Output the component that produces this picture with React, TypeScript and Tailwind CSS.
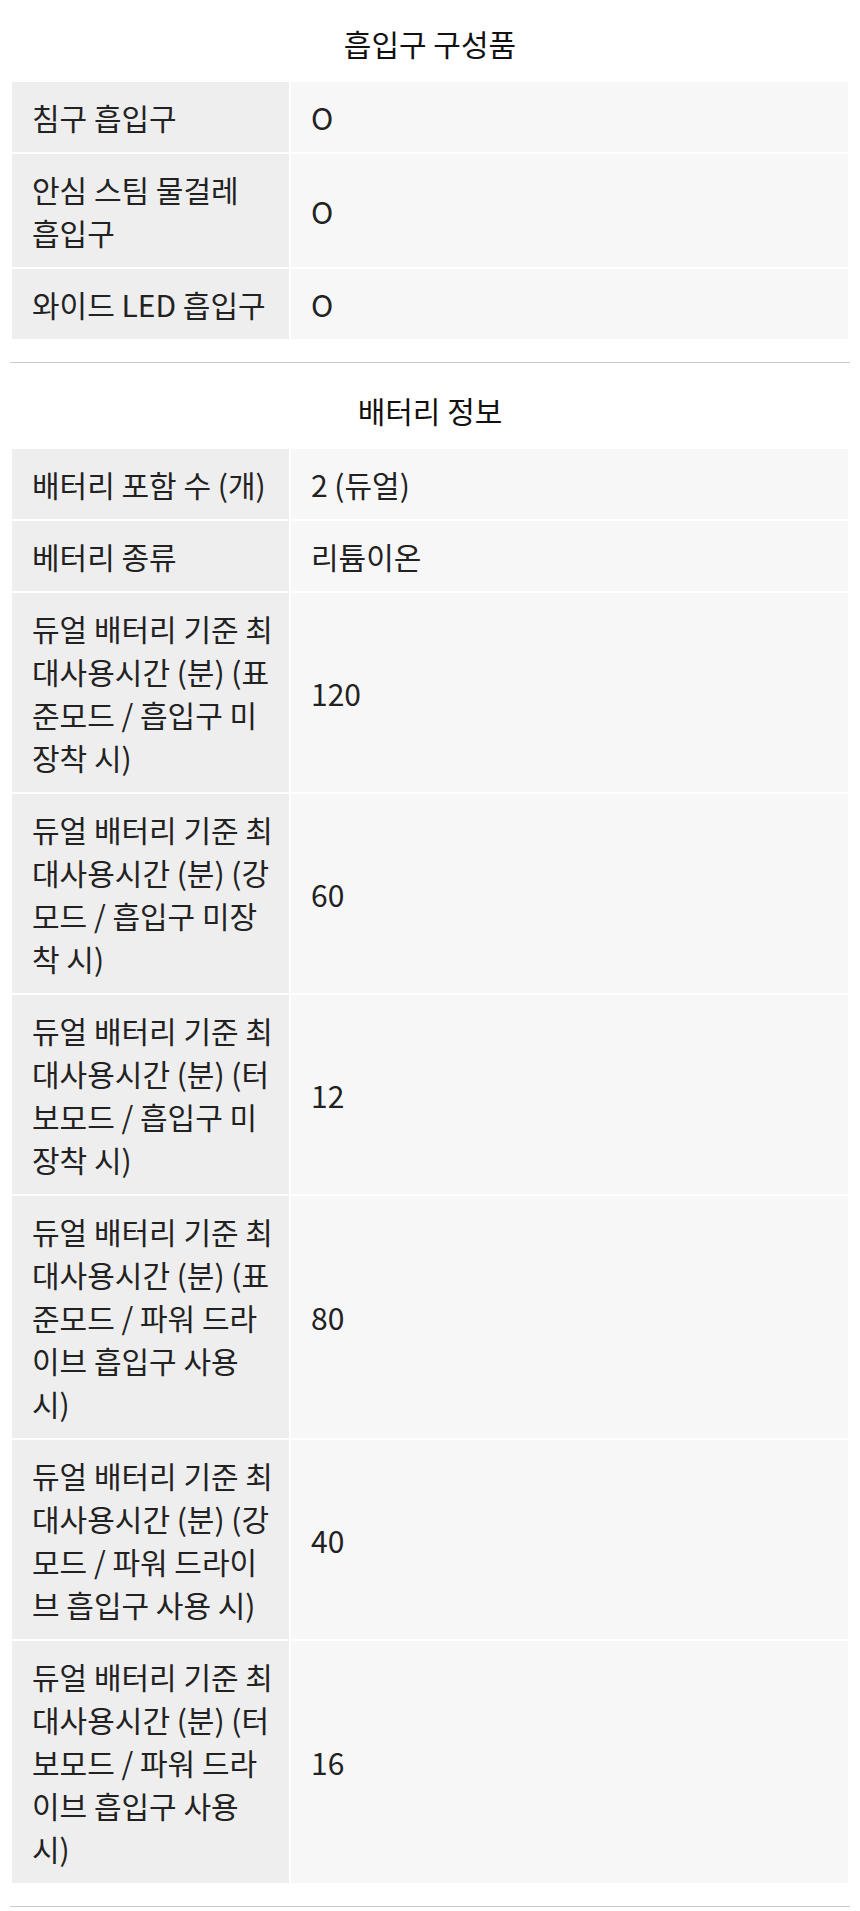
import React from 'react';

type Row = { label: React.ReactNode; value: string };

const sections: { title: string; rows: Row[] }[] = [
  {
    title: '흡입구 구성품',
    rows: [
      { label: '침구 흡입구', value: 'O' },
      { label: <>안심 스팀 물걸레 <span className="whitespace-nowrap">흡입구</span></>, value: 'O' },
      { label: '와이드 LED 흡입구', value: 'O' },
    ],
  },
  {
    title: '배터리 정보',
    rows: [
      { label: '배터리 포함 수 (개)', value: '2 (듀얼)' },
      { label: '베터리 종류', value: '리튬이온' },
      { label: '듀얼 배터리 기준 최대사용시간 (분) (표준모드 / 흡입구 미장착 시)', value: '120' },
      { label: '듀얼 배터리 기준 최대사용시간 (분) (강모드 / 흡입구 미장착 시)', value: '60' },
      { label: '듀얼 배터리 기준 최대사용시간 (분) (터보모드 / 흡입구 미장착 시)', value: '12' },
      { label: '듀얼 배터리 기준 최대사용시간 (분) (표준모드 / 파워 드라이브 흡입구 사용 시)', value: '80' },
      { label: '듀얼 배터리 기준 최대사용시간 (분) (강모드 / 파워 드라이브 흡입구 사용 시)', value: '40' },
      { label: '듀얼 배터리 기준 최대사용시간 (분) (터보모드 / 파워 드라이브 흡입구 사용 시)', value: '16' },
    ],
  },
];

const SpecSection = ({ title, rows }: { title: string; rows: Row[] }) => (
  <section className="pt-[21px]">
    <h3 className="text-center text-[30px] leading-[44px] font-normal text-[#111] mb-[15px]">{title}</h3>
    <table className="w-full border-separate border-spacing-[2px] table-fixed">
      <colgroup>
        <col className="w-[277px]" />
        <col />
      </colgroup>
      <tbody>
        {rows.map((r, i) => (
          <tr key={i}>
            <th className="bg-[#eeeeee] text-left font-normal align-middle pl-[20px] pr-[11px] pt-[14px] pb-[13px]">
              {r.label}
            </th>
            <td className="bg-[#f7f7f7] align-middle pl-[20px] pr-[20px] pt-[14px] pb-[13px]">{r.value}</td>
          </tr>
        ))}
      </tbody>
    </table>
    <hr className="mt-[21px] mb-[4px] border-0 border-t border-[#cccccc]" />
  </section>
);

export default function App() {
  return (
    <div
      className="bg-white px-[10px] text-[#222] text-[30px] leading-[43px]"
      style={{ fontFamily: '"Noto Sans CJK KR", "Noto Sans", sans-serif' }}
    >
      {sections.map((s) => (
        <SpecSection key={s.title} title={s.title} rows={s.rows} />
      ))}
    </div>
  );
}
